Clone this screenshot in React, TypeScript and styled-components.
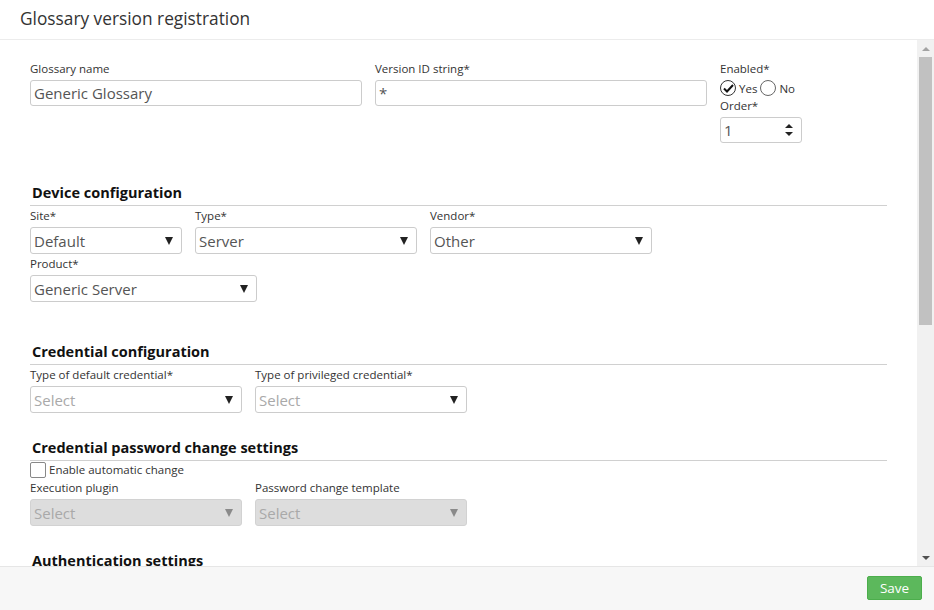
import React from 'react';
import styled, { createGlobalStyle } from 'styled-components';

const GlobalStyle = createGlobalStyle`
  html, body {
    margin: 0;
    padding: 0;
    background: #fff;
  }
  body {
    font-family: 'Open Sans', 'Liberation Sans', sans-serif;
    color: #333;
  }
  * {
    box-sizing: border-box;
  }
`;

const Page = styled.div`
  display: flex;
  flex-direction: column;
  height: 100vh;
  width: 100%;
`;

const Header = styled.header`
  height: 40px;
  flex: none;
  display: flex;
  align-items: center;
  padding: 0 20px 2px;
  border-bottom: 1px solid #ececec;
`;

const Title = styled.h1`
  margin: 0;
  font-size: 17.3px;
  font-weight: 400;
  color: #333;
`;

const Viewport = styled.div`
  flex: 1;
  min-height: 0;
  display: flex;
`;

const Content = styled.main`
  flex: 1;
  overflow: hidden;
  padding: 19px 30px 40px;
`;

const ScrollTrack = styled.div`
  width: 17px;
  flex: none;
  background: #f1f1f1;
  display: flex;
  flex-direction: column;
`;

const ScrollButton = styled.div`
  height: 17px;
  flex: none;
  display: flex;
  align-items: center;
  justify-content: center;
`;

const ScrollThumb = styled.div`
  height: 268px;
  margin: 0 2px;
  background: #c1c1c1;
`;

const ScrollRest = styled.div`
  flex: 1;
`;

const ArrowGlyph = styled.span<{ $up?: boolean; $color: string }>`
  width: 0;
  height: 0;
  border-left: 4px solid transparent;
  border-right: 4px solid transparent;
  ${(p) =>
    p.$up ? `border-bottom: 4px solid ${p.$color};` : `border-top: 4px solid ${p.$color};`}
`;

const Row = styled.div`
  display: flex;
  gap: 13px;
`;

const Field = styled.div<{ $w: number }>`
  display: flex;
  flex-direction: column;
  width: ${(p) => p.$w}px;
  flex: none;
`;

const Label = styled.label`
  display: block;
  font-size: 11.5px;
  line-height: 14px;
  color: #333;
  margin: 3px 0 4px;
  white-space: nowrap;
`;

const TextInput = styled.div`
  height: 26px;
  border: 1px solid #ccc;
  border-radius: 3px;
  padding: 0 3px;
  display: flex;
  align-items: center;
  font-size: 15px;
  color: #555;
  background: #fff;
`;

const SelectBox = styled.div<{ $disabled?: boolean }>`
  height: 27px;
  border: 1px solid ${(p) => (p.$disabled ? '#d2d2d2' : '#ccc')};
  border-radius: 3px;
  padding: 0 8px 0 3px;
  display: flex;
  align-items: center;
  justify-content: space-between;
  font-size: 15px;
  background: ${(p) => (p.$disabled ? '#dddddd' : '#fff')};
`;

const SelectValue = styled.span<{ $placeholder?: boolean }>`
  color: ${(p) => (p.$placeholder ? '#a9a9a9' : '#555')};
`;

const Caret = styled.span<{ $disabled?: boolean }>`
  width: 0;
  height: 0;
  border-left: 4px solid transparent;
  border-right: 4px solid transparent;
  border-top: 8px solid ${(p) => (p.$disabled ? '#8a8a8a' : '#222')};
`;

const Section = styled.section<{ $top: number }>`
  margin-top: ${(p) => p.$top}px;
`;

const SectionTitle = styled.h2`
  margin: 0;
  padding: 0 0 2px 2px;
  font-size: 14.5px;
  font-weight: 700;
  line-height: 20px;
  color: #111;
  border-bottom: 1px solid #d0d0d0;
  white-space: nowrap;
`;

const SectionInner = styled.div`
  width: 857px;
`;

const RadioRow = styled.div`
  display: flex;
  align-items: center;
  gap: 3px;
  height: 16px;
  font-size: 11.5px;
  color: #333;
`;

const RadioCircle = styled.span<{ $checked?: boolean }>`
  width: 16px;
  height: 16px;
  border-radius: 50%;
  border: 1px solid ${(p) => (p.$checked ? '#333' : '#666')};
  display: inline-flex;
  align-items: center;
  justify-content: center;
  background: #fff;
`;

const NumberInput = styled(TextInput)`
  width: 82px;
  justify-content: space-between;
  padding-right: 8px;
`;

const Spinner = styled.span`
  display: flex;
  flex-direction: column;
  gap: 4px;
`;

const CheckRow = styled.label`
  display: flex;
  align-items: center;
  gap: 3px;
  height: 17px;
  font-size: 11.5px;
  color: #333;
`;

const CheckBox = styled.span`
  width: 16px;
  height: 16px;
  border: 1px solid #888;
  border-radius: 2px;
  background: #fff;
`;

const Footer = styled.footer`
  height: 44px;
  flex: none;
  background: #f7f7f7;
  border-top: 1px solid #e6e6e6;
  display: flex;
  align-items: center;
  justify-content: flex-end;
  padding: 0 12px 2px;
`;

const SaveButton = styled.button`
  height: 24px;
  width: 55px;
  border: 1px solid #4cae4c;
  border-radius: 2px;
  background: #5cb85c;
  color: #fff;
  font-family: inherit;
  font-size: 13.5px;
  padding: 0;
`;

const Select: React.FC<{ value: string; placeholder?: boolean; disabled?: boolean }> = ({
  value,
  placeholder,
  disabled,
}) => (
  <SelectBox $disabled={disabled}>
    <SelectValue $placeholder={placeholder}>{value}</SelectValue>
    <Caret $disabled={disabled} />
  </SelectBox>
);

const SelectField: React.FC<{ label: string; w: number; value?: string; disabled?: boolean }> = ({
  label,
  w,
  value,
  disabled,
}) => (
  <Field $w={w}>
    <Label>{label}</Label>
    <Select value={value ?? 'Select'} placeholder={!value} disabled={disabled} />
  </Field>
);

const Check = () => (
  <svg width="11" height="9" viewBox="0 0 11 9">
    <path d="M1 4.5 L4 7.5 L10 1" stroke="#111" strokeWidth="2" fill="none" />
  </svg>
);

export default function App() {
  return (
    <Page>
      <GlobalStyle />
      <Header>
        <Title>Glossary version registration</Title>
      </Header>
      <Viewport>
        <Content>
          <Row>
            <Field $w={332}>
              <Label>Glossary name</Label>
              <TextInput>Generic Glossary</TextInput>
            </Field>
            <Field $w={332}>
              <Label>Version ID string*</Label>
              <TextInput>*</TextInput>
            </Field>
            <Field $w={120}>
              <Label>Enabled*</Label>
              <RadioRow>
                <RadioCircle $checked>
                  <Check />
                </RadioCircle>
                Yes
                <RadioCircle />
                No
              </RadioRow>
              <Label>Order*</Label>
              <NumberInput>
                1
                <Spinner>
                  <ArrowGlyph $up $color="#222" />
                  <ArrowGlyph $color="#222" />
                </Spinner>
              </NumberInput>
            </Field>
          </Row>

          <SectionInner>
            <Section $top={40}>
              <SectionTitle>Device configuration</SectionTitle>
              <Row>
                <SelectField label="Site*" w={152} value="Default" />
                <SelectField label="Type*" w={222} value="Server" />
                <SelectField label="Vendor*" w={222} value="Other" />
              </Row>
              <Row>
                <SelectField label="Product*" w={227} value="Generic Server" />
              </Row>
            </Section>

            <Section $top={40}>
              <SectionTitle>Credential configuration</SectionTitle>
              <Row>
                <SelectField label="Type of default credential*" w={212} />
                <SelectField label="Type of privileged credential*" w={212} />
              </Row>
            </Section>

            <Section $top={25}>
              <SectionTitle>Credential password change settings</SectionTitle>
              <CheckRow>
                <CheckBox />
                Enable automatic change
              </CheckRow>
              <Row>
                <SelectField label="Execution plugin" w={212} disabled />
                <SelectField label="Password change template" w={212} disabled />
              </Row>
            </Section>

            <Section $top={25}>
              <SectionTitle>Authentication settings</SectionTitle>
              <Row>
                <SelectField label="Authentication method*" w={212} value="Password" />
              </Row>
            </Section>
          </SectionInner>
        </Content>
        <ScrollTrack>
          <ScrollButton>
            <ArrowGlyph $up $color="#a3a3a3" />
          </ScrollButton>
          <ScrollThumb />
          <ScrollRest />
          <ScrollButton>
            <ArrowGlyph $color="#505050" />
          </ScrollButton>
        </ScrollTrack>
      </Viewport>
      <Footer>
        <SaveButton>Save</SaveButton>
      </Footer>
    </Page>
  );
}
